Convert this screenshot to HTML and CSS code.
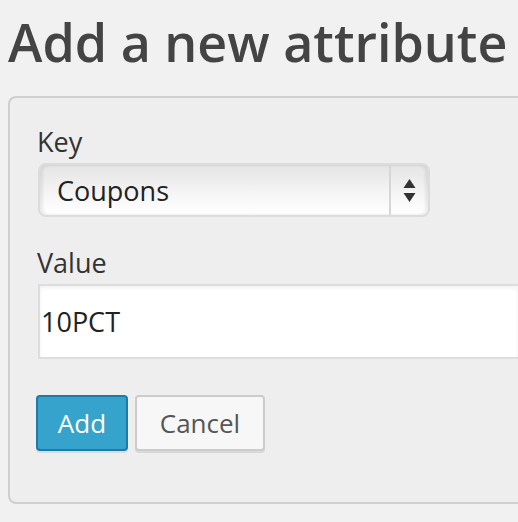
FILE: index.html
```html
<!DOCTYPE html>
<html>
<head>
<meta charset="utf-8">
<link rel="stylesheet" href="styles.css">
</head>
<body>
<h1 class="title">Add a new attribute</h1>
<div class="panel">
  <div class="field">
    <label class="label">Key</label>
    <div class="select">
      <span class="select-text">Coupons</span>
      <span class="select-arrows">
        <svg width="13" height="25" viewBox="0 0 13 25"><polygon points="6.5,1 12.5,10 0.5,10" fill="#333"/><polygon points="0.5,15 12.5,15 6.5,24" fill="#333"/></svg>
      </span>
    </div>
  </div>
  <div class="field field-value">
    <label class="label">Value</label>
    <div class="input">10PCT</div>
  </div>
  <div class="actions">
    <button class="btn btn-primary">Add</button>
    <button class="btn btn-secondary">Cancel</button>
  </div>
</div>
</body>
</html>
```
FILE: styles.css
```css
html, body {
  margin: 0;
  padding: 0;
  background: #f1f1f1;
  font-family: "Open Sans", "DejaVu Sans", sans-serif;
  color: #444;
}
body {
  width: 518px;
  height: 522px;
  overflow: hidden;
}
.title {
  margin: 0;
  padding: 7px 0 0 8px;
  font-size: 52px;
  font-weight: 600;
  line-height: 70px;
  color: #444;
  white-space: nowrap;
}
.panel {
  margin: 19px 0 0 8px;
  border: 2px solid #cfcfcf;
  border-right: none;
  border-radius: 8px 0 0 8px;
  background: #eeeeee;
  padding: 29px 0 0 28px;
  height: 408px;
  box-sizing: border-box;
}
.field {
  display: flex;
  flex-direction: column;
}
.label {
  font-size: 27px;
  line-height: 30px;
  color: #333;
  margin-bottom: 6px;
  margin-left: -1px;
}
.select {
  width: 392px;
  height: 54px;
  box-sizing: border-box;
  border: 2px solid #dcdcdc;
  border-radius: 8px;
  background: linear-gradient(#e4e4e4, #f6f6f6 60%, #ffffff);
  display: flex;
  align-items: center;
  box-shadow: inset 3px 0 3px rgba(0,0,0,0.07), inset -3px 0 3px rgba(0,0,0,0.07);
}
.select-text {
  flex: 1;
  padding-left: 17px;
  font-size: 27px;
  color: #222;
}
.select-arrows {
  width: 37px;
  height: 100%;
  border-left: 2px solid #d6d6d6;
  display: flex;
  align-items: center;
  justify-content: center;
}
.field-value {
  margin-top: 31px;
}
.input {
  height: 75px;
  box-sizing: border-box;
  border: 2px solid #dddddd;
  border-right: none;
  background: #fff;
  box-shadow: inset 0 2px 4px rgba(0,0,0,0.06);
  font-size: 27px;
  color: #222;
  padding-left: 1px;
  display: flex;
  align-items: center;
}
.actions {
  display: flex;
  gap: 7px;
  margin-top: 36px;
  margin-left: -2px;
}
.btn {
  height: 56px;
  box-sizing: border-box;
  border-radius: 4px;
  font-family: "Open Sans", "DejaVu Sans", sans-serif;
  font-size: 26px;
  padding: 0;
}
.btn-primary {
  width: 92px;
  background: #35a3cb;
  border: 2px solid #1e7aa6;
  color: #fff;
  box-shadow: 0 2px 0 rgba(0,0,0,0.08);
}
.btn-secondary {
  width: 130px;
  background: #f7f7f7;
  border: 2px solid #cccccc;
  color: #555;
  box-shadow: 0 2px 0 #d8d8d8;
}
```
